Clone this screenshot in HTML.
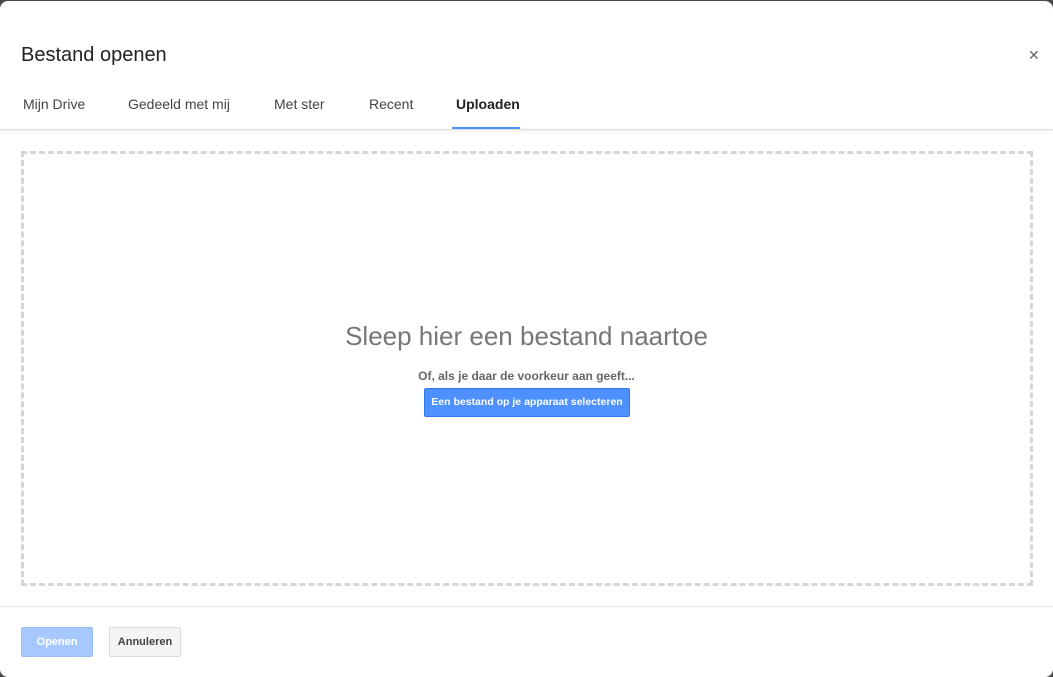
<!DOCTYPE html>
<html><head><meta charset="utf-8"><style>
html,body{margin:0;padding:0;}
body{width:1053px;height:677px;background:#4a4a4a;position:relative;overflow:hidden;font-family:"Liberation Sans",Arial,sans-serif;}
.dlg{position:absolute;left:0;top:1px;width:1053px;height:676px;background:#fff;border-radius:8px;}
.title{position:absolute;left:21px;top:43px;font-size:20px;color:#222;}
.close{position:absolute;left:1028px;top:46px;font-size:14px;color:#666;}
.tab{position:absolute;top:95px;font-size:14px;color:#444;}
.tabbar{position:absolute;left:0;top:128px;width:1053px;height:1px;background:#e0e0e0;box-shadow:0 1px 2px rgba(0,0,0,.15);}
.ind{position:absolute;left:452px;top:126px;width:68px;height:2px;background:#4d90fe;}
.drop{position:absolute;left:21px;top:150px;width:1006px;height:429px;border:3px dashed #d6d6d6;}
.big{position:absolute;left:0;width:1053px;text-align:center;top:320px;font-size:26px;color:#777;}
.or{position:absolute;left:0;width:1053px;text-align:center;top:368px;font-size:12px;font-weight:bold;color:#666;}
.sel{position:absolute;left:424px;top:387px;width:206px;height:29px;background:#4d90fe;border:1px solid #3079ed;box-sizing:border-box;border-radius:2px;color:#fff;font-size:10.5px;font-weight:bold;text-align:center;line-height:27px;}
.foot{position:absolute;left:0;top:605px;width:1053px;height:1px;background:#e5e5e5;}
.btn{position:absolute;top:626px;height:30px;box-sizing:border-box;border-radius:2px;font-size:11px;font-weight:bold;text-align:center;line-height:28px;}
</style></head><body>
<div class="dlg">
<div class="title">Bestand openen</div>
<div class="close">✕</div>
<div class="tab" style="left:23px">Mijn Drive</div>
<div class="tab" style="left:128px">Gedeeld met mij</div>
<div class="tab" style="left:274px">Met ster</div>
<div class="tab" style="left:369px">Recent</div>
<div class="tab" style="left:456px;font-weight:bold;color:#222">Uploaden</div>
<div class="tabbar"></div>
<div class="ind"></div>
<div class="drop"></div>
<div class="big">Sleep hier een bestand naartoe</div>
<div class="or">Of, als je daar de voorkeur aan geeft...</div>
<div class="sel">Een bestand op je apparaat selecteren</div>
<div class="foot"></div>
<div class="btn" style="left:21px;width:72px;background:#a6c8ff;border:1px solid #9bbff7;color:#fff">Openen</div>
<div class="btn" style="left:109px;width:72px;background:#f5f5f5;border:1px solid #dcdcdc;color:#444">Annuleren</div>
</div>
</body></html>
